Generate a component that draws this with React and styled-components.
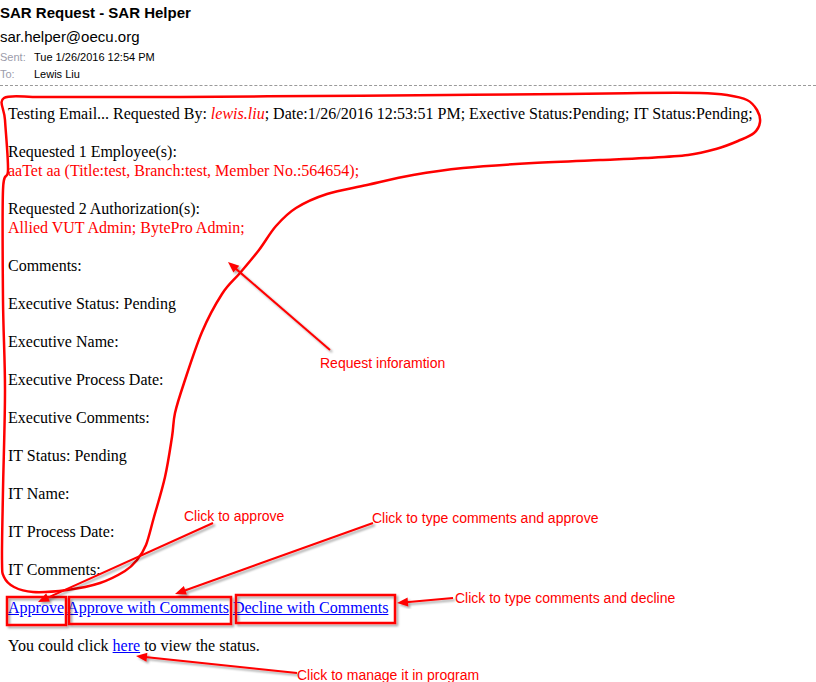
import styled, { createGlobalStyle } from 'styled-components'

const GlobalStyle = createGlobalStyle`
  html, body {
    margin: 0;
    padding: 0;
    background: #fff;
  }
`

const Page = styled.div`
  position: relative;
  width: 816px;
  height: 682px;
  overflow: hidden;
  background: #fff;
`

const Header = styled.header`
  font-family: "Liberation Sans", Arial, sans-serif;
  color: #000;
  padding-bottom: 2px;
  border-bottom: 1px dashed #9a9a9a;
`

const Title = styled.div`
  font-size: 15px;
  font-weight: bold;
  line-height: 26px;
  height: 26px;
`

const Sender = styled.div`
  font-size: 15px;
  line-height: 22px;
  height: 22px;
`

const MetaRow = styled.div`
  display: grid;
  grid-template-columns: 34px auto;
  font-size: 11px;
  line-height: ${(props) => props.$h}px;
  height: ${(props) => props.$h}px;
`

const MetaLabel = styled.span`
  color: #9c9cab;
`

const Body = styled.main`
  font-family: "Liberation Serif", "Times New Roman", serif;
  font-size: 16px;
  line-height: 19px;
  color: #000;
  padding: 18px 8px 0;
`

const Para = styled.p`
  margin: 0 0 19px;
  white-space: nowrap;
`

const Red = styled.span`
  color: #ff0000;
  font-style: ${(props) => (props.$italic ? 'italic' : 'normal')};
`

const Line = styled.span`
  display: block;
`

const Link = styled.a`
  color: #0000ff;
  text-decoration: underline;
  cursor: pointer;
`

const Overlay = styled.svg`
  position: absolute;
  left: 0;
  top: 0;
  pointer-events: none;
`

const Callout = styled.span`
  position: absolute;
  left: ${(props) => props.$x}px;
  top: ${(props) => props.$y - 8}px;
  font-family: "Liberation Sans", Arial, sans-serif;
  font-size: 14px;
  line-height: 16px;
  color: #ff0000;
  white-space: nowrap;
`

const outline = [
  [4, 98], [40, 97], [100, 97], [180, 97], [313, 96], [447, 95], [567, 94],
  [640, 93], [700, 93], [727, 95], [747, 100], [757, 110], [760, 122],
  [754, 133], [738, 141], [716, 149], [688, 155], [645, 158], [600, 160],
  [533, 163], [463, 168], [413, 175], [367, 185], [327, 194], [296, 208],
  [276, 226], [259, 250], [240, 273], [222, 294], [202, 332], [184, 383],
  [175, 413], [172, 437], [165, 477], [154, 517], [146, 545], [137, 560],
  [125, 571], [100, 583], [67, 590], [33, 592], [14, 587], [4, 577],
  [2, 560], [3, 490], [5, 390], [3, 300], [3, 190], [8, 170], [5, 120],
]

function smoothPath(pts) {
  const n = pts.length
  const f = (p) => `${p[0].toFixed(1)},${p[1].toFixed(1)}`
  let d = `M${f(pts[0])}`
  for (let i = 0; i < n; i++) {
    const p0 = pts[(i - 1 + n) % n]
    const p1 = pts[i]
    const p2 = pts[(i + 1) % n]
    const p3 = pts[(i + 2) % n]
    const c1 = [p1[0] + (p2[0] - p0[0]) / 6, p1[1] + (p2[1] - p0[1]) / 6]
    const c2 = [p2[0] - (p3[0] - p1[0]) / 6, p2[1] - (p3[1] - p1[1]) / 6]
    d += ` C${f(c1)} ${f(c2)} ${f(p2)}`
  }
  return d + 'Z'
}

function Arrow({ from, to }) {
  const dx = to[0] - from[0]
  const dy = to[1] - from[1]
  const len = Math.hypot(dx, dy)
  const ux = dx / len
  const uy = dy / len
  const headLen = 11
  const headW = 4.5
  const bx = to[0] - ux * headLen
  const by = to[1] - uy * headLen
  const head = [
    [to[0], to[1]],
    [bx - uy * headW, by + ux * headW],
    [bx + uy * headW, by - ux * headW],
  ]
  return (
    <g filter="url(#shadow)">
      <line x1={from[0]} y1={from[1]} x2={bx + ux * 2} y2={by + uy * 2} stroke="#ff0000" strokeWidth="2" />
      <polygon points={head.map((p) => p.join(',')).join(' ')} fill="#ff0000" />
    </g>
  )
}

const boxes = [
  { x: 7, y: 597, w: 59, h: 28 },
  { x: 69, y: 597, w: 162, h: 27 },
  { x: 236, y: 595, w: 159, h: 28 },
]

const arrows = [
  { from: [330, 350], to: [228, 262] },
  { from: [213, 523], to: [38, 602] },
  { from: [373, 523], to: [175, 594] },
  { from: [453, 598], to: [397, 603] },
  { from: [297, 673], to: [136, 656] },
]

function Annotations() {
  return (
    <Overlay width="816" height="682" viewBox="0 0 816 682">
      <defs>
        <filter id="shadow" x="-20%" y="-20%" width="140%" height="140%">
          <feDropShadow dx="2" dy="2" stdDeviation="1.2" floodColor="#000" floodOpacity="0.35" />
        </filter>
      </defs>
      <path d={smoothPath(outline)} fill="none" stroke="#ff0000" strokeWidth="2.5" strokeLinejoin="round" />
      {boxes.map((b, i) => (
        <rect key={i} x={b.x} y={b.y} width={b.w} height={b.h} fill="none" stroke="#ff0000" strokeWidth="2.5" filter="url(#shadow)" />
      ))}
      {arrows.map((a, i) => (
        <Arrow key={i} from={a.from} to={a.to} />
      ))}
    </Overlay>
  )
}

const fields = [
  'Comments:',
  'Executive Status: Pending',
  'Executive Name:',
  'Executive Process Date:',
  'Executive Comments:',
  'IT Status: Pending',
  'IT Name:',
  'IT Process Date:',
  'IT Comments:',
]

export default function App() {
  return (
    <Page>
      <GlobalStyle />
      <Header>
        <Title>SAR Request - SAR Helper</Title>
        <Sender>sar.helper@oecu.org</Sender>
        <MetaRow $h={18}>
          <MetaLabel>Sent:</MetaLabel>
          <span>Tue 1/26/2016 12:54 PM</span>
        </MetaRow>
        <MetaRow $h={17}>
          <MetaLabel>To:</MetaLabel>
          <span>Lewis Liu</span>
        </MetaRow>
      </Header>
      <Body>
        <Para>
          Testing Email... Requested By: <Red $italic>lewis.liu</Red>; Date:1/26/2016 12:53:51 PM; Exective
          Status:Pending; IT Status:Pending;
        </Para>
        <Para>
          <Line>Requested 1 Employee(s):</Line>
          <Red>aaTet aa (Title:test, Branch:test, Member No.:564654);</Red>
        </Para>
        <Para>
          <Line>Requested 2 Authorization(s):</Line>
          <Red>Allied VUT Admin; BytePro Admin;</Red>
        </Para>
        {fields.map((f) => (
          <Para key={f}>{f}</Para>
        ))}
        <Para>
          <Link>Approve</Link> <Link>Approve with Comments</Link> <Link>Decline with Comments</Link>
        </Para>
        <Para>
          You could click <Link>here</Link> to view the status.
        </Para>
      </Body>
      <Annotations />
      <Callout $x={320} $y={363}>Request inforamtion</Callout>
      <Callout $x={184} $y={516}>Click to approve</Callout>
      <Callout $x={372} $y={518}>Click to type comments and approve</Callout>
      <Callout $x={455} $y={598}>Click to type comments and decline</Callout>
      <Callout $x={297} $y={675}>Click to manage it in program</Callout>
    </Page>
  )
}
